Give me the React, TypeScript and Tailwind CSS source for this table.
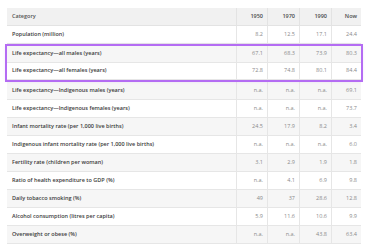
import React from 'react';

interface Row {
  label: string;
  values: string[];
}

const ROWS: Row[] = [
  { label: 'Population (million)', values: ['8.2', '12.5', '17.1', '24.4'] },
  { label: 'Life expectancy—all males (years)', values: ['67.1', '68.3', '73.9', '80.3'] },
  { label: 'Life expectancy—all females (years)', values: ['72.8', '74.8', '80.1', '84.4'] },
  { label: 'Life expectancy—Indigenous males (years)', values: ['n.a.', 'n.a.', 'n.a.', '69.1'] },
  { label: 'Life expectancy—Indigenous females (years)', values: ['n.a.', 'n.a.', 'n.a.', '73.7'] },
  { label: 'Infant mortality rate (per 1,000 live births)', values: ['24.5', '17.9', '8.2', '3.4'] },
  { label: 'Indigenous infant mortality rate (per 1,000 live births)', values: ['n.a.', 'n.a.', 'n.a.', '6.0'] },
  { label: 'Fertility rate (children per woman)', values: ['3.1', '2.9', '1.9', '1.8'] },
  { label: 'Ratio of health expenditure to GDP (%)', values: ['n.a.', '4.1', '6.9', '9.8'] },
  { label: 'Daily tobacco smoking (%)', values: ['49', '37', '28.6', '12.8'] },
  { label: 'Alcohol consumption (litres per capita)', values: ['5.9', '11.6', '10.6', '9.9'] },
  { label: 'Overweight or obese (%)', values: ['n.a.', 'n.a.', '43.8', '63.4'] },
];

const cols = 'grid grid-cols-[230px_31px_32px_32px_29px]';

const DataRow: React.FC<{ row: Row; shaded: boolean; tall?: boolean }> = ({ row, shaded, tall = true }) => (
  <div className={`${cols} ${tall ? 'h-[18px]' : 'h-[17px]'} border-b border-[#e6e6e6] ${shaded ? 'bg-[#f6f6f6]' : 'bg-white'}`}>
    <div className="flex items-center pl-[5px] font-semibold text-[#3a3a3a] border-r border-[#e6e6e6]">{row.label}</div>
    {row.values.map((v, i) => (
      <div
        key={i}
        className={`flex items-center justify-end pr-[4px] text-[#8a8a8a] ${i < 3 ? 'border-r border-[#e6e6e6]' : ''}`}
      >
        {v}
      </div>
    ))}
  </div>
);

export default function App() {
  const head = ROWS.slice(0, 1);
  const highlighted = ROWS.slice(1, 3);
  const rest = ROWS.slice(3);

  return (
    <div className="w-[370px] h-[250px] bg-white pt-[8px] pl-[7px] overflow-hidden font-['Open_Sans',sans-serif] text-[5.5px] leading-none">
      <div className="w-[354px]">
        {/* header */}
        <div className={`${cols} h-[18px] bg-[#f1f1f1] border-b border-[#e3e3e3]`}>
          <div className="flex items-center pl-[5px] font-semibold text-[#555] border-r border-[#e3e3e3]">Category</div>
          {['1950', '1970', '1990', 'Now'].map((h, i) => (
            <div
              key={h}
              className={`flex items-center justify-end pr-[4px] font-semibold text-[#4a4a4a] ${i < 3 ? 'border-r border-[#e3e3e3]' : ''}`}
            >
              {h}
            </div>
          ))}
        </div>

        {head.map((r) => (
          <DataRow key={r.label} row={r} shaded={false} />
        ))}

        {/* highlighted group */}
        <div className="relative z-10 my-[2px] outline-2 outline-[#b46cf3] shadow-[0_0_4px_rgba(180,108,243,0.45)]">
          {highlighted.map((r, i) => (
            <DataRow key={r.label} row={r} shaded={i === 0} tall={false} />
          ))}
        </div>

        {rest.map((r, i) => (
          <DataRow key={r.label} row={r} shaded={i % 2 === 0} />
        ))}
      </div>
    </div>
  );
}
